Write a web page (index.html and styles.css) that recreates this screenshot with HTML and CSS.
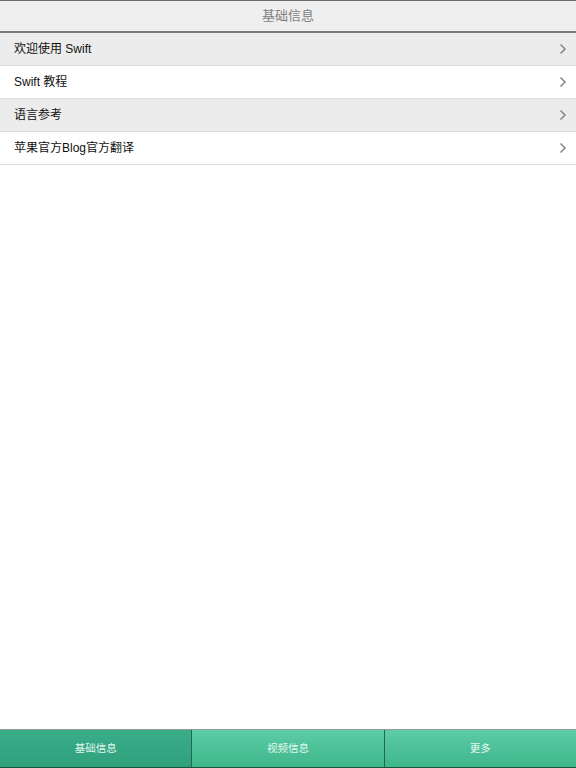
FILE: index.html
```html
<!DOCTYPE html>
<html lang="zh">
<head>
<meta charset="utf-8">
<link rel="stylesheet" href="styles.css">
</head>
<body>
<div class="app">
  <header class="navbar"><span class="title">基础信息</span></header>
  <ul class="list">
    <li class="row alt"><span class="label">欢迎使用 Swift</span><svg class="chev" width="8" height="12" viewBox="0 0 8 12"><path d="M1.5 1.5 L6 6 L1.5 10.5" fill="none" stroke="#8a8a8a" stroke-width="1.6"/></svg></li>
    <li class="row"><span class="label">Swift 教程</span><svg class="chev" width="8" height="12" viewBox="0 0 8 12"><path d="M1.5 1.5 L6 6 L1.5 10.5" fill="none" stroke="#8a8a8a" stroke-width="1.6"/></svg></li>
    <li class="row alt"><span class="label">语言参考</span><svg class="chev" width="8" height="12" viewBox="0 0 8 12"><path d="M1.5 1.5 L6 6 L1.5 10.5" fill="none" stroke="#8a8a8a" stroke-width="1.6"/></svg></li>
    <li class="row"><span class="label">苹果官方Blog官方翻译</span><svg class="chev" width="8" height="12" viewBox="0 0 8 12"><path d="M1.5 1.5 L6 6 L1.5 10.5" fill="none" stroke="#8a8a8a" stroke-width="1.6"/></svg></li>
  </ul>
  <div class="spacer"></div>
  <nav class="tabbar">
    <div class="tab active">基础信息</div>
    <div class="tab">视频信息</div>
    <div class="tab last">更多</div>
  </nav>
</div>
</body>
</html>
```

FILE: styles.css
```css
* { box-sizing: border-box; }
html, body { margin: 0; padding: 0; background: #fff; }
body {
  font-family: "Liberation Sans", "Noto Sans CJK SC", sans-serif;
}
.app {
  width: 576px;
  height: 768px;
  display: flex;
  flex-direction: column;
}
.navbar {
  height: 33px;
  background: #efefef;
  border-top: 1px solid #6a6a6a;
  border-bottom: 2px solid #7a7a7a;
  display: flex;
  align-items: center;
  justify-content: center;
}
.title {
  font-size: 13px;
  line-height: 16px;
  color: #808080;
}
.list {
  list-style: none;
  margin: 0;
  padding: 0;
}
.row {
  height: 33px;
  background: #fff;
  border-bottom: 1px solid #dcdcdc;
  display: flex;
  align-items: center;
  justify-content: space-between;
  padding: 0 9px 0 14px;
}
.row.alt { background: #ececec; }
.label {
  font-size: 12px;
  line-height: 16px;
  color: #111;
}
.chev { display: block; }
.spacer { flex: 1; }
.tabbar {
  height: 39px;
  display: flex;
  border-top: 1px solid #9a9a9a;
  border-bottom: 1px solid #17573f;
}
.tab {
  flex: 1;
  display: flex;
  align-items: center;
  justify-content: center;
  padding-bottom: 1px;
  font-size: 10.5px;
  line-height: 14px;
  color: #e4f6ef;
  background: linear-gradient(#5ccca6, #3fb68c);
  border-right: 1px solid #1f6a4e;
}
.tab.last { border-right: none; }
.tab.active {
  background: linear-gradient(#3aae89, #2fa07b);
}
```
